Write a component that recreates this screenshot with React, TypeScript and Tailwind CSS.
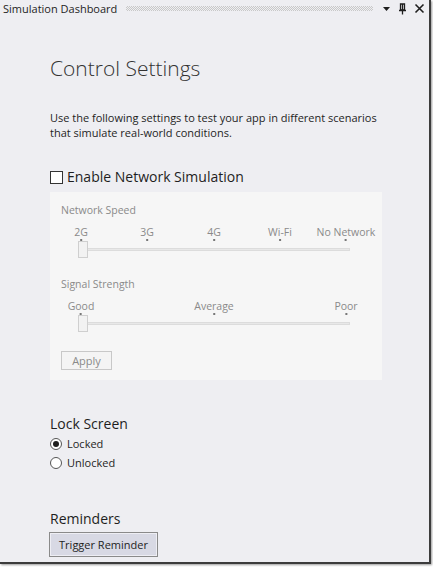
import React from "react";

const font = { fontFamily: '"Open Sans", "Noto Sans", sans-serif' };

function TitleIcons() {
  return (
    <div className="flex items-center gap-[7px] pr-[4px] text-[#1e1e1e]">
      <svg width="9" height="9" viewBox="0 0 9 9">
        <path d="M1 3h7L4.5 7z" fill="#1e1e1e" />
      </svg>
      <svg width="9" height="12" viewBox="0 0 9 12">
        <path d="M2.5 1h4v6h-4zM4.5 1v6" fill="none" stroke="#1e1e1e" strokeWidth="1.3" />
        <path d="M1 7.5h7M4.5 7.5V11.5" stroke="#1e1e1e" strokeWidth="1.3" />
      </svg>
      <svg width="11" height="11" viewBox="0 0 11 11">
        <path d="M1.5 1.5l8 8M9.5 1.5l-8 8" stroke="#1e1e1e" strokeWidth="1.6" />
      </svg>
    </div>
  );
}

function Slider({ labels, positions }: { labels: string[]; positions: number[] }) {
  return (
    <div className="relative h-[40px]">
      {labels.map((label, i) => (
        <div
          key={label}
          className="absolute top-0 flex -translate-x-1/2 flex-col items-center"
          style={{ left: positions[i] }}
        >
          <span className="whitespace-nowrap text-[10.5px] leading-[13px] text-[#8a8a8a]">{label}</span>
          <span className="mt-[0px] h-[2px] w-[2px] bg-[#777]" />
        </div>
      ))}
      <div className="absolute left-[17px] top-[22px] h-[3px] w-[272px] border border-[#dcdcdc] bg-[#e8e8e8]" />
      <div className="absolute left-[17px] top-[15px] h-[17px] w-[10px] border border-[#cfcfcf] bg-[#f2f2f2]" />
    </div>
  );
}

export default function App() {
  return (
    <div className="h-[567px] w-[433px] bg-white" style={font}>
      <div className="flex h-[564px] w-[431px] flex-col border-b-[2px] border-r-[2px] border-[#3c3c3c] bg-[#eeeef2] shadow-[1px_1px_2px_rgba(0,0,0,0.4)]">
        <div className="flex h-[17px] items-center">
          <span className="pl-[3px] pr-[9px] text-[11px] leading-[15px] text-[#1e1e1e]">Simulation Dashboard</span>
          <div className="mr-[9px] h-[5px] flex-1 bg-[repeating-conic-gradient(#c8c8c8_0_25%,transparent_0_50%)] bg-[length:2px_2px]" />
          <TitleIcons />
        </div>

        <div className="pl-[50px] pt-[37px]">
          <h1 className="text-[21px] font-light leading-[28px] text-[#333]">Control Settings</h1>
          <p className="mt-[28px] w-[340px] text-[11px] leading-[15px] text-[#1e1e1e]">
            Use the following settings to test your app in different scenarios that simulate real-world conditions.
          </p>

          <label className="mt-[28px] flex items-center gap-[4px]">
            <span className="h-[13px] w-[13px] border border-[#333] bg-white" />
            <span className="text-[14px] leading-[18px] text-[#1e1e1e]">Enable Network Simulation</span>
          </label>

          <div className="mt-[6px] h-[188px] w-[332px] bg-[#f6f6f6] pl-[11px] pt-[11px]">
            <p className="text-[10.5px] leading-[14px] text-[#8a8a8a]">Network Speed</p>
            <div className="mt-[9px]">
              <Slider labels={["2G", "3G", "4G", "Wi-Fi", "No Network"]} positions={[20, 86, 153, 219, 285]} />
            </div>
            <p className="mt-[11px] text-[10.5px] leading-[14px] text-[#8a8a8a]">Signal Strength</p>
            <div className="mt-[9px]">
              <Slider labels={["Good", "Average", "Poor"]} positions={[20, 153, 285]} />
            </div>
            <button className="mt-[11px] h-[19px] w-[51px] border border-[#c8c8c8] bg-[#f4f4f4] text-[11px] leading-[16px] text-[#8a8a8a]">
              Apply
            </button>
          </div>

          <h2 className="mt-[34px] text-[14px] leading-[20px] text-[#1e1e1e]">Lock Screen</h2>
          <div className="mt-[1px] flex items-center gap-[5px]">
            <span className="grid h-[12px] w-[12px] place-items-center rounded-full border border-[#555] bg-white">
              <span className="h-[6px] w-[6px] rounded-full bg-[#1e1e1e]" />
            </span>
            <span className="text-[11px] leading-[18px] text-[#1e1e1e]">Locked</span>
          </div>
          <div className="mt-[1px] flex items-center gap-[5px]">
            <span className="h-[12px] w-[12px] rounded-full border border-[#555] bg-white" />
            <span className="text-[11px] leading-[18px] text-[#1e1e1e]">Unlocked</span>
          </div>

          <h2 className="mt-[37px] text-[14px] leading-[20px] text-[#1e1e1e]">Reminders</h2>
          <button className="-ml-[1px] mt-[3px] h-[25px] w-[109px] border border-[#8a8a8a] bg-[#d8d9e4] text-[11px] leading-[16px] text-[#1e1e1e] shadow-[inset_0_0_0_1px_#eeeef4]">
            Trigger Reminder
          </button>
        </div>
      </div>
    </div>
  );
}
